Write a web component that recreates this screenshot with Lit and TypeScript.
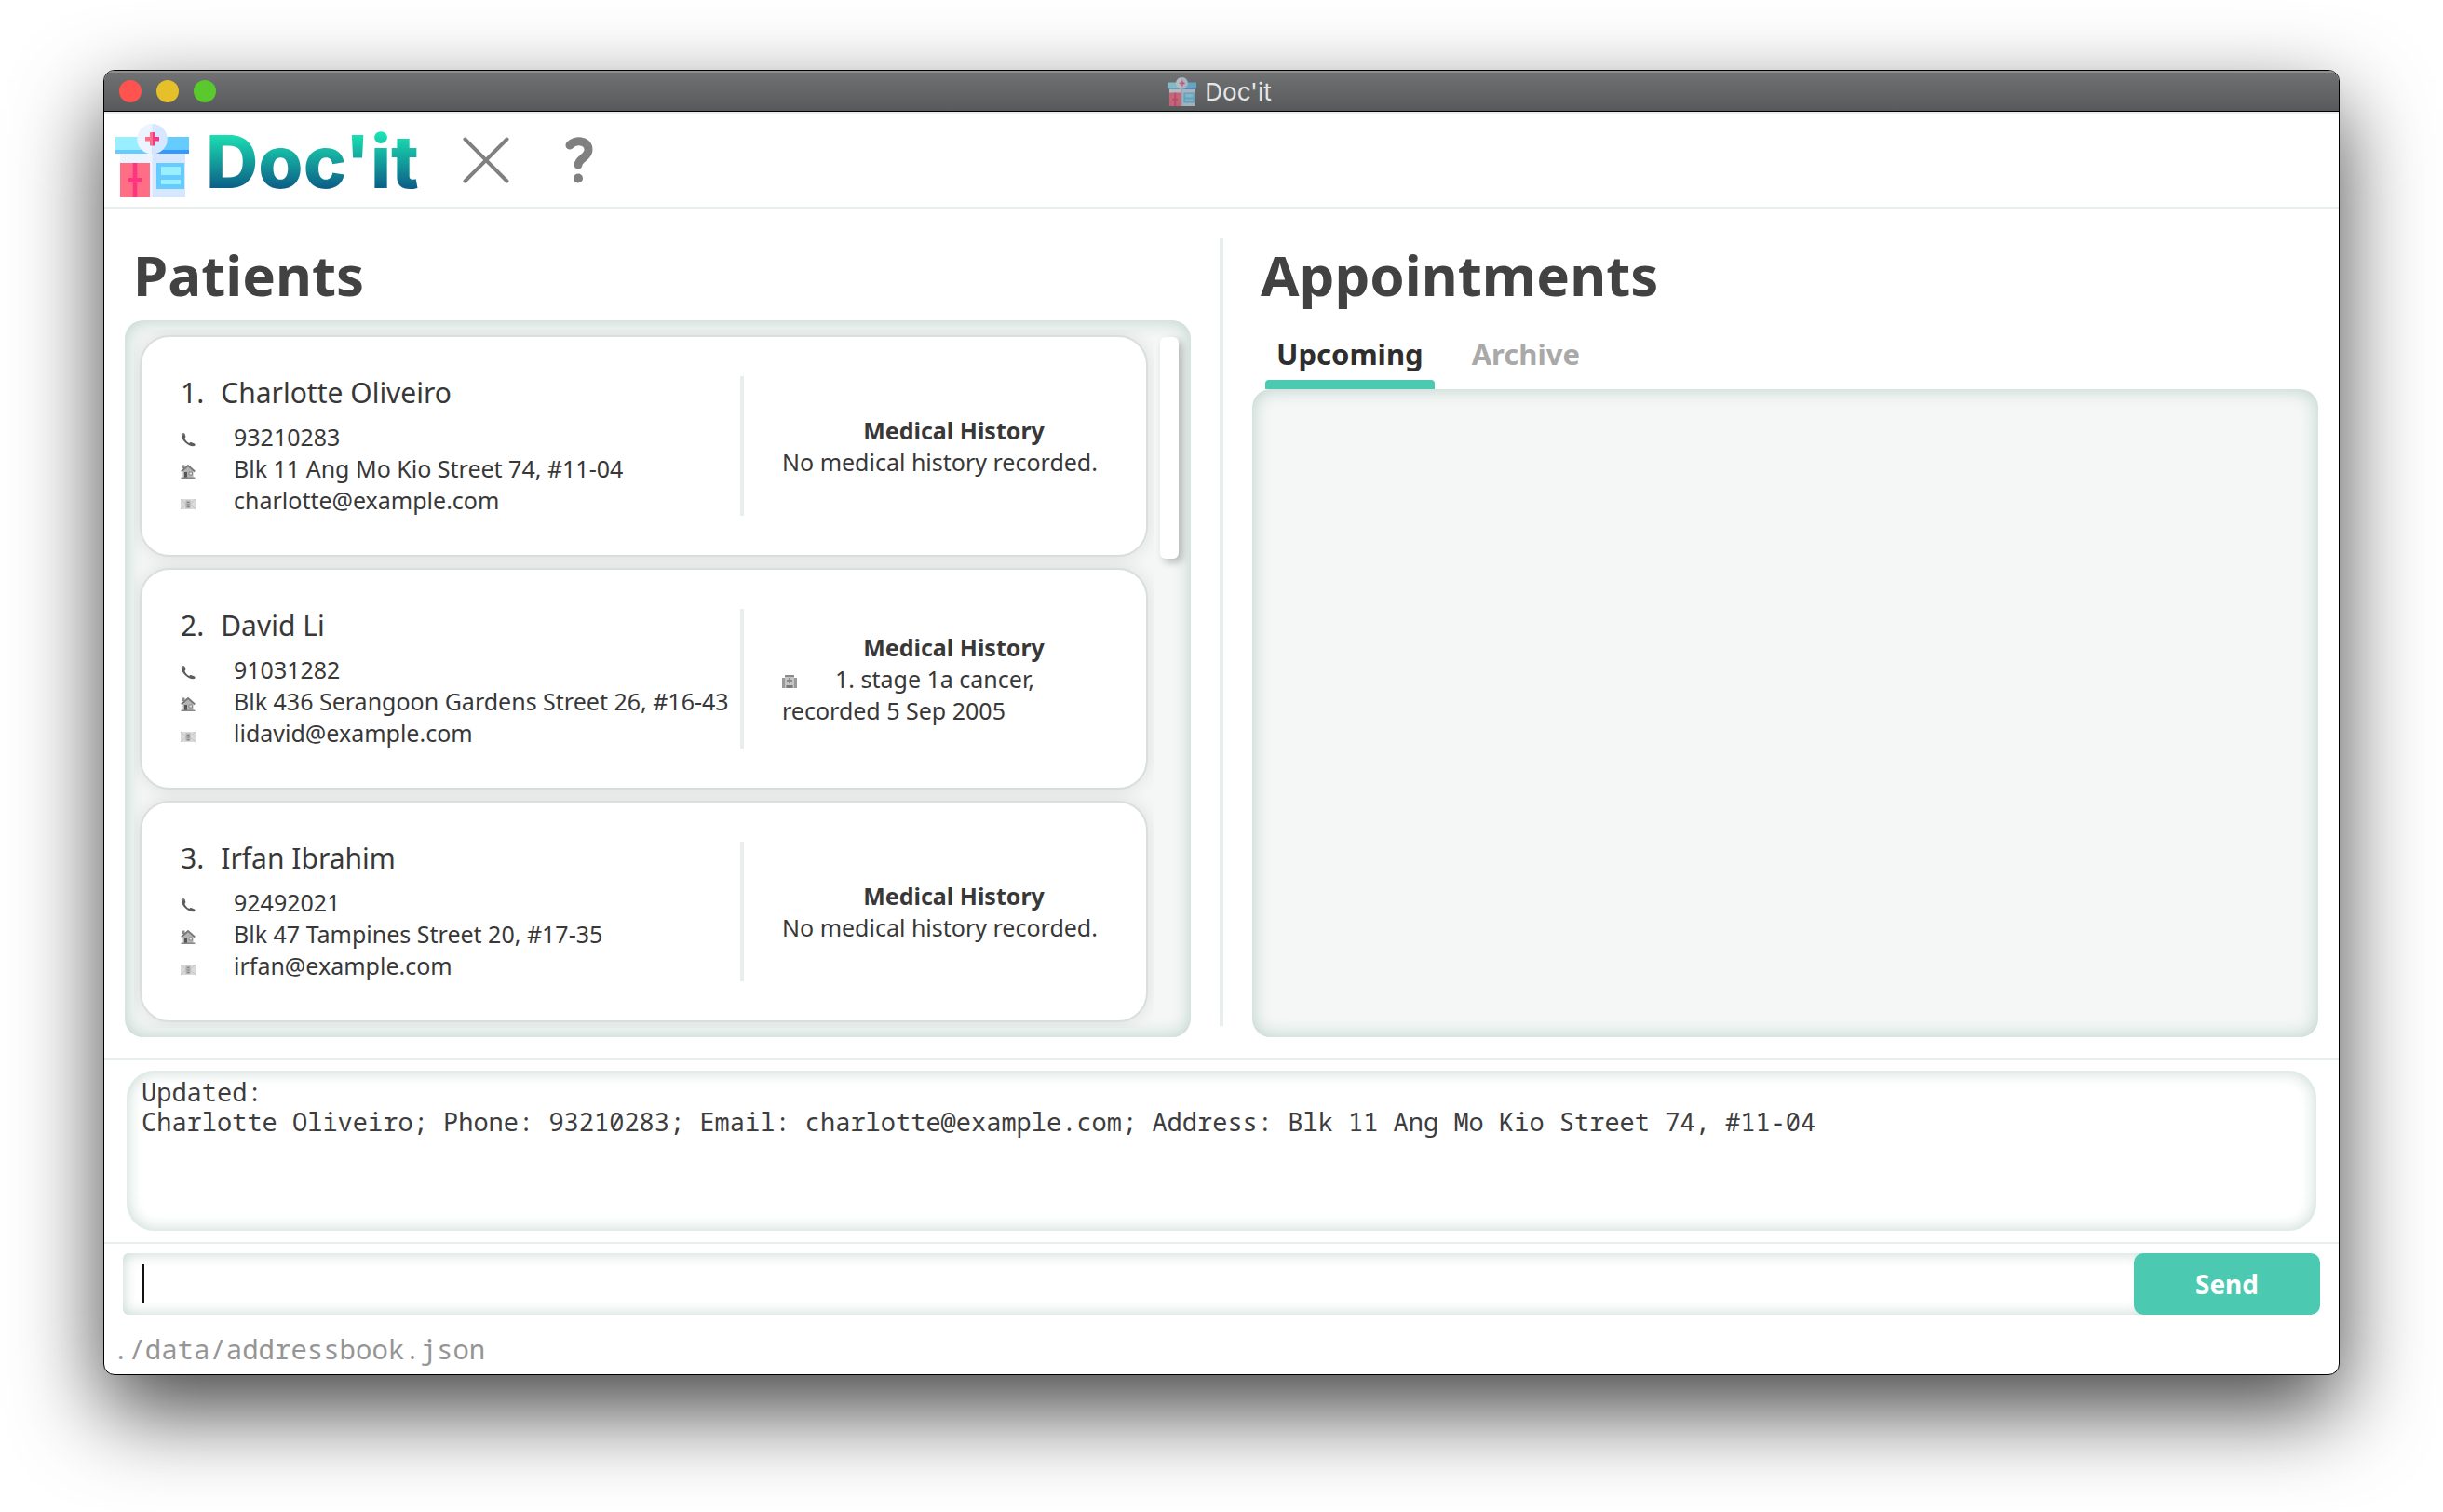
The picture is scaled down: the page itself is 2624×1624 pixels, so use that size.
import { LitElement, html, css, svg, nothing } from "lit";
import { customElement, property, state } from "lit/decorators.js";
import { classMap } from "lit/directives/class-map.js";

interface Patient {
  name: string;
  phone: string;
  address: string;
  email: string;
  history: string[][];
}

const PATIENTS: Patient[] = [
  {
    name: "Charlotte Oliveiro",
    phone: "93210283",
    address: "Blk 11 Ang Mo Kio Street 74, #11-04",
    email: "charlotte@example.com",
    history: [],
  },
  {
    name: "David Li",
    phone: "91031282",
    address: "Blk 436 Serangoon Gardens Street 26, #16-43",
    email: "lidavid@example.com",
    history: [["stage 1a cancer,", "recorded 5 Sep 2005"]],
  },
  {
    name: "Irfan Ibrahim",
    phone: "92492021",
    address: "Blk 47 Tampines Street 20, #17-35",
    email: "irfan@example.com",
    history: [],
  },
];

const phoneIcon = svg`
  <path d="M1 2.5C2 .8 4.200 1 4.800 2.800L5.400 5C5.500 6 4.300 6.300 4.600 7.200C5.300 9 7 10.800 8.800 11.800C9.600 12.200 10 11 11 11.100L14.500 12.200C16.200 13 15.800 14.600 14.500 15C9.500 16.300 0 9 1 2.500Z" fill="#5c5c5c"/>
  <path d="M1.800 3.500C2 2.500 3.500 2.300 3.900 3.400" fill="none" stroke="#8c8c8c"/>`;

const houseIcon = svg`
  <path d="M2.500 8L8 3L13.500 8V15H2.500Z" fill="#b4b4b4"/>
  <path d="M2 1.500H4.500V5H2Z" fill="#8a8a8a"/>
  <path d="M.8 8.500L8 2L15.200 8.500" fill="none" stroke="#777" stroke-width="2"/>
  <path d="M4 9H7V15H4Z" fill="#555"/>
  <path d="M9 9H12.500V12H9Z" fill="#e0e0e0" stroke="#888"/>
  <path d="M.5 14.500H15.500V16H.5Z" fill="#888"/>`;

const mailIcon = svg`
  <path d="M0 4H16V15H0Z" fill="#dadada"/>
  <path d="M0 4L6 9.500L0 15M16 4L10 9.500L16 15" fill="none" stroke="#c4c4c4"/>
  <path d="M5.500 5.500H10.500V14H5.500Z" fill="#b2b2b2"/>
  <path d="M7 7.500H9.500M7 10H9.500M7 12.500H9.500" stroke="#858585"/>`;

const hospitalIcon = svg`
  <path d="M3 1H13V3H3Z" fill="#8c8c8c"/>
  <path d="M0 4H3V15H0ZM13 4H16V15H13Z" fill="#9a9a9a"/>
  <path d="M3 3H13V15H3Z" fill="#c4c4c4"/>
  <path d="M8 4V10M5 7H11" stroke="#8a8a8a" stroke-width="2"/>
  <path d="M4.500 12H11.500V15H4.500Z" fill="#7c7c7c"/>`;

@customElement("clinic-logo")
export class ClinicLogo extends LitElement {
  static styles = css`
    :host {
      display: block;
    }
    .art {
      display: block;
      width: 100%;
      height: 100%;
    }
  `;

  render() {
    return html`<svg class="art" viewBox="0 0 79 79" aria-hidden="true">
      <path d="M5 32H39.500V79H5Z" fill="#ecf4ff" />
      <path d="M39.500 32H75V79H39.500Z" fill="#d6e7ff" />
      <path d="M0 14H39.500V28H0Z" fill="#99eeff" />
      <path d="M0 28H39.500V32H0Z" fill="#66ccff" />
      <path d="M39.500 14H79V28H39.500Z" fill="#66ccff" />
      <path d="M39.500 28H79V32H39.500Z" fill="#3399ff" />
      <path d="M39.500 0A16.300 16.300 0 0 0 39.500 32.600Z" fill="#ecf4ff" />
      <path d="M39.500 0A16.300 16.300 0 0 1 39.500 32.600Z" fill="#d6e7ff" />
      <path d="M37 9H39.500V23.500H37V18.500H32V14H37Z" fill="#ff6e84" />
      <path d="M39.500 9H42V14H47V18.500H42V23.500H39.500Z" fill="#ff3380" />
      <path d="M5 42H37V79H5Z" fill="#ff6e84" />
      <path d="M18.700 42H23.300V58H28V63H23.300V79H18.700V63H14V58H18.700Z" fill="#ff3380" />
      <path d="M44 42H74V70H44Z" fill="#66ccff" />
      <path d="M49 46H70V55H49ZM49 60H70V65H49Z" fill="#99eeff" />
    </svg>`;
  }
}

@customElement("patient-card")
export class PatientCard extends LitElement {
  @property({ attribute: false }) patient!: Patient;
  @property({ type: Number }) index = 1;

  static styles = css`
    :host {
      display: block;
    }
    .card {
      box-sizing: border-box;
      display: grid;
      grid-template-columns: minmax(0, 1fr) 4px 410px;
      padding: 42px 22px 42px 42px;
      border: 2px solid #d9dfdd;
      border-radius: 32px;
      background: #fff;
      box-shadow: 0 0 20px rgba(0, 0, 0, 0.1);
      color: #383838;
      font-size: 25px;
      line-height: 34px;
    }
    .rule {
      background: #e8eeec;
    }
    .name {
      display: flex;
      gap: 18px;
      margin: 0 0 12px;
      font-size: 30px;
      font-weight: 400;
      line-height: 36px;
    }
    .contact {
      display: grid;
      margin: 0;
      padding: 0;
      list-style: none;
    }
    .row {
      display: flex;
      align-items: center;
      gap: 41px;
      white-space: nowrap;
    }
    .icon {
      flex: none;
      width: 16px;
      height: 16px;
      margin-top: 6px;
    }
    .history {
      display: flex;
      flex-direction: column;
      justify-content: center;
      padding-left: 41px;
    }
    .heading {
      margin: 0;
      font-size: 25px;
      font-weight: 700;
      line-height: 34px;
      text-align: center;
    }
    .entry {
      margin: 0;
    }
  `;

  private glyph(shape: unknown) {
    return html`<svg class="icon" viewBox="0 0 16 16" aria-hidden="true">${shape}</svg>`;
  }

  render() {
    const p = this.patient;
    return html`<article class="card">
      <div>
        <h3 class="name"><span>${this.index}.</span><span>${p.name}</span></h3>
        <ul class="contact">
          <li class="row">${this.glyph(phoneIcon)}<span>${p.phone}</span></li>
          <li class="row">${this.glyph(houseIcon)}<span>${p.address}</span></li>
          <li class="row">${this.glyph(mailIcon)}<span>${p.email}</span></li>
        </ul>
      </div>
      <div class="rule"></div>
      <div class="history">
        <h4 class="heading">Medical History</h4>
        ${p.history.length === 0
          ? html`<p class="entry">No medical history recorded.</p>`
          : p.history.map(
              ([what, when], i) => html`
                <div class="row">${this.glyph(hospitalIcon)}<span>${i + 1}. ${what}</span></div>
                <p class="entry">${when}</p>
              `,
            )}
      </div>
    </article>`;
  }
}

@customElement("app-root")
export class AppRoot extends LitElement {
  @state() private tab = "Upcoming";

  static styles = css`
    :host {
      box-sizing: border-box;
      display: flex;
      min-height: 100vh;
      padding: 75px 111px 147px;
      overflow: hidden;
      background: #fff;
      color: #424242;
      font-family: "Noto Sans", "Open Sans", sans-serif;
    }
    .window {
      flex: 1;
      display: flex;
      flex-direction: column;
      min-width: 0;
      border: 1px solid #000;
      border-radius: 12px;
      background: #fff;
      overflow: hidden;
      box-shadow: 0 38px 94px rgba(0, 0, 0, 0.73);
    }
    .titlebar {
      display: grid;
      grid-template-columns: 1fr auto 1fr;
      align-items: center;
      height: 43px;
      padding: 0 16px;
      border-bottom: 1px solid #000;
      background: linear-gradient(#707274, #58595b);
      box-shadow: inset 0 2px 0 #8c8f8e;
    }
    .lights {
      display: flex;
      gap: 16px;
    }
    .light {
      width: 24px;
      height: 24px;
      padding: 0;
      border: 0;
      border-radius: 50%;
    }
    .close {
      background: #ff5350;
    }
    .minimise {
      background: #e6c02a;
    }
    .zoom {
      background: #59c92d;
    }
    .title {
      display: flex;
      align-items: center;
      gap: 9px;
      padding: 2px 4px 0 0;
      color: #e6e6e6;
      font-family: Inter, sans-serif;
      font-size: 26px;
      line-height: 40px;
    }
    .title-logo {
      width: 31px;
      height: 31px;
      opacity: 0.6;
    }
    .header {
      display: flex;
      align-items: center;
      height: 100px;
      padding-left: 12px;
      border-top: 2px solid #e8eeec;
      border-bottom: 2px solid #e8eeec;
    }
    .logo {
      width: 79px;
      height: 79px;
    }
    .brand {
      margin: 0 0 0 18px;
      padding-top: 4px;
      background: linear-gradient(#1ce5b4 20%, #0c5e86 80%);
      background-clip: text;
      -webkit-background-clip: text;
      color: transparent;
      font-family: Inter, sans-serif;
      font-size: 78px;
      font-weight: 800;
      line-height: 96px;
    }
    .tool {
      display: grid;
      place-items: center;
      width: 100px;
      height: 100px;
      padding: 0;
      border: 0;
      background: none;
    }
    .tools {
      display: flex;
      margin-left: 22px;
    }
    .tool-icon {
      width: 50px;
      height: 50px;
      fill: none;
      stroke: #808080;
      stroke-linecap: round;
    }
    .main {
      flex: 1;
      display: grid;
      grid-template-columns: minmax(0, 1fr) 4px minmax(0, 1fr);
      column-gap: 31px;
      padding: 32px 22px 22px;
      border-bottom: 2px solid #e8eeec;
    }
    .split {
      margin-bottom: 12px;
      background: #e8eeec;
    }
    .column {
      display: flex;
      flex-direction: column;
    }
    .section-title {
      margin: 0 0 10px;
      padding-left: 9px;
      font-size: 60px;
      font-weight: 700;
      line-height: 78px;
    }
    .panel {
      flex: 1;
      display: flex;
      box-sizing: border-box;
      padding: 10px 0 10px 10px;
      border-radius: 20px;
      background: #f5f7f6;
      box-shadow: inset 0 0 20px #b8cfc8;
    }
    .list {
      flex: 1;
      display: flex;
      flex-direction: column;
      gap: 12px;
      min-width: 0;
      padding: 6px;
      overflow: hidden;
    }
    .track {
      width: 40px;
      box-sizing: border-box;
      padding: 8px 13px 8px 7px;
    }
    .thumb {
      height: 238px;
      border-radius: 6px;
      background: #fff;
      box-shadow: 4px 4px 8px rgba(0, 0, 0, 0.25);
    }
    .tabs {
      display: flex;
      gap: 28px;
      height: 74px;
      padding-left: 14px;
    }
    .tab {
      padding: 8px 12px 0;
      border: 0;
      background: none;
      color: #a9a9a9;
      font: 700 31px/56px "Noto Sans", "Open Sans", sans-serif;
      display: flex;
      flex-direction: column;
      justify-content: space-between;
    }
    .tab::after {
      content: "";
      height: 10px;
      margin: 0 -12px;
      align-self: stretch;
      border-radius: 4px 4px 0 0;
    }
    .active {
      color: #2e2e2e;
    }
    .active::after {
      background: #4bcab1;
    }
    .result {
      padding: 12px 24px;
      border-bottom: 2px solid #e8eeec;
    }
    .output {
      display: block;
      box-sizing: border-box;
      width: 100%;
      height: 172px;
      padding: 7px 16px;
      border: 0;
      border-radius: 30px;
      outline: 0;
      resize: none;
      background: #fff;
      box-shadow: inset 0 0 18px #c2d6d0;
      color: #3d3d3d;
      font: 27px/32px "Noto Sans Mono", "DejaVu Sans Mono", "Liberation Mono", monospace;
    }
    .command {
      position: relative;
      display: flex;
      padding: 10px 20px 0;
    }
    .entry {
      flex: 1;
      min-width: 0;
      box-sizing: border-box;
      height: 66px;
      margin-right: -12px;
      padding: 0 22px;
      border: 0;
      border-radius: 6px;
      outline: 0;
      background: #fff;
      box-shadow: inset 0 0 16px #c2d6d0;
      font: 27px/32px "Noto Sans Mono", "DejaVu Sans Mono", monospace;
    }
    .caret {
      position: absolute;
      left: 41px;
      top: 22px;
      width: 2px;
      height: 42px;
      background: #111;
    }
    .send {
      position: relative;
      width: 200px;
      height: 66px;
      padding: 0;
      border: 0;
      border-radius: 10px;
      background: #4bcab1;
      color: #fff;
      font: 700 28px/34px "Noto Sans", "Open Sans", sans-serif;
    }
    .status {
      height: 54px;
      padding: 10px 9px 0;
      color: #959595;
      font: 29px/54px "Noto Sans Mono", "DejaVu Sans Mono", "Liberation Mono", monospace;
    }
  `;

  render() {
    return html`
      <div class="window">
        <div class="titlebar">
          <div class="lights">
            <button class="light close" aria-label="Close"></button>
            <button class="light minimise" aria-label="Minimise"></button>
            <button class="light zoom" aria-label="Zoom"></button>
          </div>
          <div class="title"><clinic-logo class="title-logo"></clinic-logo><span>Doc'it</span></div>
        </div>
        <header class="header">
          <clinic-logo class="logo"></clinic-logo>
          <h1 class="brand">Doc'it</h1>
          <nav class="tools">
            <button class="tool" aria-label="Exit">
              <svg class="tool-icon" viewBox="0 0 50 50" aria-hidden="true">
                <path d="M2.500 2.500L47.500 47.500M47.500 2.500L2.500 47.500" stroke-width="4" />
              </svg>
            </button>
            <button class="tool" aria-label="Help">
              <svg class="tool-icon" viewBox="0 0 50 50" aria-hidden="true">
                <path d="M15 9C20 3 35 2.500 35 14C35 22 24.500 23 24 30" stroke-width="9" />
                <circle cx="24" cy="44.500" r="5" fill="#808080" stroke="none" />
              </svg>
            </button>
          </nav>
        </header>
        <main class="main">
          <section class="column">
            <h2 class="section-title">Patients</h2>
            <div class="panel">
              <div class="list">
                ${PATIENTS.map(
                  (p, i) => html`<patient-card .patient=${p} .index=${i + 1}></patient-card>`,
                )}
              </div>
              <div class="track"><div class="thumb"></div></div>
            </div>
          </section>
          <div class="split"></div>
          <section class="column">
            <h2 class="section-title">Appointments</h2>
            <div class="tabs" role="tablist">
              ${["Upcoming", "Archive"].map(
                (t) => html`<button
                  class=${classMap({ tab: true, active: t === this.tab })}
                  role="tab"
                  aria-selected=${t === this.tab}
                  @click=${() => (this.tab = t)}
                >
                  ${t}
                </button>`,
              )}
            </div>
            <div class="panel" role="tabpanel">${nothing}</div>
          </section>
        </main>
        <section class="result">
          <textarea
            class="output"
            readonly
            aria-label="Result"
            .value=${"Updated:\nCharlotte Oliveiro; Phone: 93210283; Email: charlotte@example.com; Address: Blk 11 Ang Mo Kio Street 74, #11-04"}
          ></textarea>
        </section>
        <form class="command" @submit=${(e: Event) => e.preventDefault()}>
          <input class="entry" type="text" aria-label="Command" />
          <span class="caret"></span>
          <button class="send" type="submit">Send</button>
        </form>
        <footer class="status">./data/addressbook.json</footer>
      </div>
    `;
  }
}
